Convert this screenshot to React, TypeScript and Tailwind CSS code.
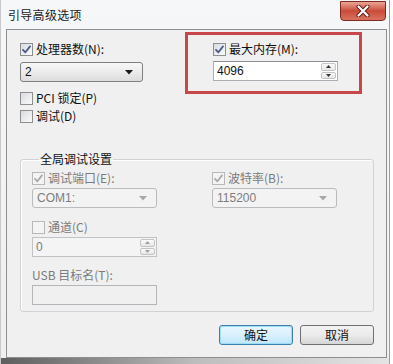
import React from 'react';

const cjk = { fontFamily: '"Noto Sans CJK SC", "Noto Sans", sans-serif' };
const latin = { fontFamily: '"Liberation Sans", Arial, sans-serif' };

function Check({ checked, disabled }: { checked?: boolean; disabled?: boolean }) {
  return (
    <div
      className={`w-[13px] h-[13px] shrink-0 border flex items-center justify-center ${
        disabled ? 'border-[#b8b8b8] bg-[#f4f4f4]' : 'border-[#8e8f8f] bg-gradient-to-br from-[#d8dbe0] to-[#fbfbfb]'
      }`}
    >
      {checked && (
        <svg width="11" height="11" viewBox="0 0 11 11">
          <path
            d="M2 5.8 L4.4 8.3 L9 2.4"
            fill="none"
            stroke={disabled ? '#a9a9a9' : '#4a5c86'}
            strokeWidth="1.8"
            strokeLinecap="round"
            strokeLinejoin="round"
          />
        </svg>
      )}
    </div>
  );
}

function CheckRow({ label, checked, disabled }: { label: string; checked?: boolean; disabled?: boolean }) {
  return (
    <div className="h-[16px] flex items-center gap-[3px]">
      <Check checked={checked} disabled={disabled} />
      <span
        className={`text-[12px] leading-[16px] ${disabled ? 'text-[#7b7b7b]' : 'text-[#111]'}`}
        style={cjk}
      >
        {label}
      </span>
    </div>
  );
}

function Combo({ value, disabled, w }: { value: string; disabled?: boolean; w: string }) {
  return (
    <div
      className={`${w} h-[20px] rounded-[3px] border flex items-center pl-[4px] pr-[9px] ${
        disabled
          ? 'border-[#b9bcbf] bg-[#f3f3f3] text-[#7d7d7d]'
          : 'border-[#808080] bg-gradient-to-b from-[#f7f7f7] via-[#ececec] to-[#dcdcdc] text-[#111]'
      }`}
    >
      <span className="flex-1 text-[12px] leading-[14px]" style={latin}>
        {value}
      </span>
      <svg width="8" height="5" viewBox="0 0 8 5">
        <path d="M0 0 H8 L4 4.5 Z" fill={disabled ? '#a8a8a8' : '#1a1a1a'} />
      </svg>
    </div>
  );
}

function Spin({ value, disabled, w }: { value: string; disabled?: boolean; w: string }) {
  const arrow = disabled ? '#a0a0a0' : '#333';
  return (
    <div
      className={`${w} h-[20px] border flex items-center pl-[3px] pr-[1px] ${
        disabled ? 'border-[#c0c2c4] bg-[#f4f4f4] text-[#7d7d7d]' : 'border-[#abadb3] border-t-[#8c8f96] bg-white text-[#111]'
      }`}
    >
      <span className="flex-1 text-[12px] leading-[14px]" style={latin}>
        {value}
      </span>
      <div className="w-[15px] h-[16px] flex flex-col gap-[1px]">
        <div className="flex-1 rounded-[2px] border border-[#c4c4c4] bg-gradient-to-b from-[#fbfbfb] to-[#e6e6e6] flex items-center justify-center">
          <svg width="5" height="3" viewBox="0 0 5 3">
            <path d="M0 3 L2.5 0 L5 3 Z" fill={arrow} />
          </svg>
        </div>
        <div className="flex-1 rounded-[2px] border border-[#c4c4c4] bg-gradient-to-b from-[#fbfbfb] to-[#e6e6e6] flex items-center justify-center">
          <svg width="5" height="3" viewBox="0 0 5 3">
            <path d="M0 0 H5 L2.5 3 Z" fill={arrow} />
          </svg>
        </div>
      </div>
    </div>
  );
}

export default function App() {
  return (
    <div className="w-[393px] h-[364px] bg-white flex overflow-hidden">
      <div className="w-[390px] h-full flex flex-col bg-gradient-to-b from-[#f6f7f9] to-[#eeeff1] border-r border-[#9f9f9f] border-l border-l-[#c9c9c9]">
        {/* title bar */}
        <div className="h-[29px] shrink-0 flex justify-between">
          <span className="self-center pl-[7px] text-[12px] tracking-[0.3px] text-[#1b1b1b]" style={cjk}>
            引导高级选项
          </span>
          <div className="mt-[1px] mr-[3px] w-[46px] h-[20px] rounded-b-[4px] border border-[#7d2a22] bg-gradient-to-b from-[#e9a596] via-[#c94a3a] to-[#d8735f] flex items-center justify-center">
            <svg width="14" height="12" viewBox="0 0 14 12">
              <path d="M2.5 1.5 L11.5 10.5 M11.5 1.5 L2.5 10.5" stroke="#5a1d16" strokeWidth="4" strokeLinecap="round" />
              <path d="M2.5 1.5 L11.5 10.5 M11.5 1.5 L2.5 10.5" stroke="#ffffff" strokeWidth="2.2" strokeLinecap="round" />
            </svg>
          </div>
        </div>

        {/* content panel */}
        <div className="ml-[5px] w-[381px] h-[329px] shrink-0 border border-[#8d8e90] bg-[#f0f0f0] relative flex flex-col">
          <div className="pl-[13px] pt-[11px] grid grid-cols-[193px_1fr]">
            <div className="flex flex-col">
              <CheckRow label="处理器数(N):" checked />
              <div className="mt-[5px]">
                <Combo value="2" w="w-[123px]" />
              </div>
              <div className="mt-[8px]">
                <CheckRow label="PCI 锁定(P)" />
              </div>
              <div className="mt-[2px]">
                <CheckRow label="调试(D)" />
              </div>
            </div>
            <div className="flex flex-col">
              <CheckRow label="最大内存(M):" checked />
              <div className="mt-[4px]">
                <Spin value="4096" w="w-[125px]" />
              </div>
            </div>
          </div>

          {/* annotation */}
          <div className="absolute left-[178px] top-[2px] w-[177px] h-[62px] border-[3px] border-[#c8474b]" />

          <fieldset className="ml-[13px] mt-[27px] w-[354px] border border-[#d0d3d6] rounded-[3px] shadow-[inset_1px_1px_0_#ffffff] pl-[11px] pb-[6px]">
            <legend className="ml-[7px] px-[1px] text-[12px] leading-[16px] text-[#111]" style={cjk}>
              全局调试设置
            </legend>
            <div className="pt-[3px] grid grid-cols-[180px_1fr]">
              <div className="flex flex-col">
                <CheckRow label="调试端口(E):" checked disabled />
                <div className="mt-[2px]">
                  <Combo value="COM1:" w="w-[125px]" disabled />
                </div>
                <div className="mt-[11px]">
                  <CheckRow label="通道(C)" disabled />
                </div>
                <div className="mt-[2px]">
                  <Spin value="0" w="w-[125px]" disabled />
                </div>
                <div className="mt-[10px] h-[16px] text-[12px] leading-[16px] text-[#7b7b7b]" style={cjk}>
                  USB 目标名(T):
                </div>
                <div className="mt-[2px] w-[125px] h-[20px] border border-[#b3b5b8] bg-[#f0f0f0]" />
              </div>
              <div className="flex flex-col">
                <CheckRow label="波特率(B):" checked disabled />
                <div className="mt-[2px]">
                  <Combo value="115200" w="w-[125px]" disabled />
                </div>
              </div>
            </div>
          </fieldset>

          <div className="mt-[13px] pr-[12px] flex justify-end gap-[7px]">
            <div
              className="w-[74px] h-[20px] rounded-[3px] border border-[#3c7fb1] bg-gradient-to-b from-[#eaf6fd] via-[#d9f0fc] to-[#bee6fd] shadow-[inset_0_0_0_1px_#9fdcf7] flex items-center justify-center text-[12px] text-[#111]"
              style={cjk}
            >
              确定
            </div>
            <div
              className="w-[74px] h-[20px] rounded-[3px] border border-[#707070] bg-gradient-to-b from-[#f2f2f2] via-[#ebebeb] to-[#d6d6d6] flex items-center justify-center text-[12px] text-[#111]"
              style={cjk}
            >
              取消
            </div>
          </div>
        </div>

        <div className="flex-1 bg-gradient-to-r from-[#5e5e5e] via-[#bdbdbd] to-[#e4e4e4]" />
      </div>
    </div>
  );
}
